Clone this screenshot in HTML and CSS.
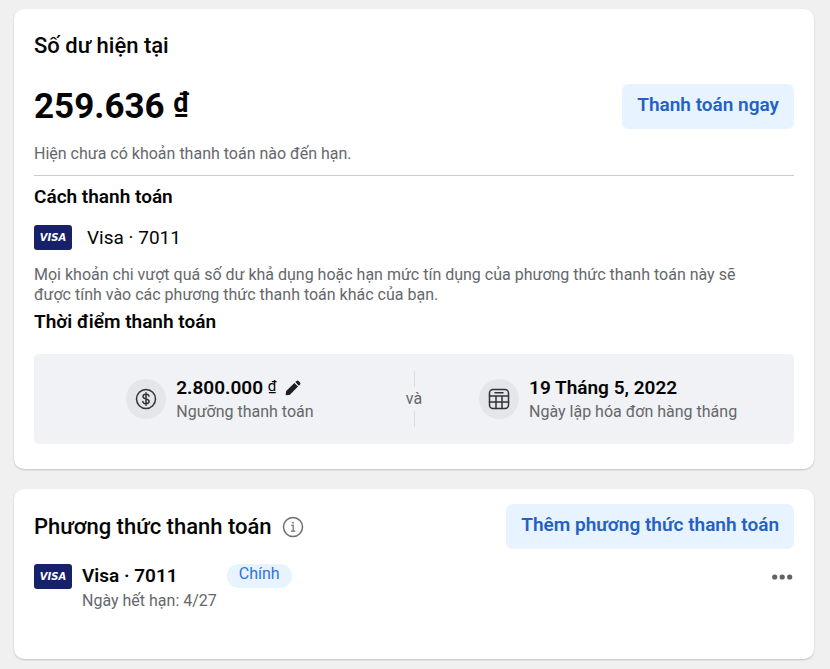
FILE: index.html
```html
<!DOCTYPE html>
<html lang="vi">
<head>
  <meta charset="UTF-8" />
  <meta name="viewport" content="width=device-width, initial-scale=1.0"/>
  <title>Thanh toán</title>
  <link rel="stylesheet" href="styles.css">
</head>
<body>

  <!-- Số dư -->
  <section class="card balance-card">
    <h2>Số dư hiện tại</h2>
    <div class="balance">
      <p class="amount">259.636 <span class="dong">₫</span></p>
      <button class="btn" type="button">Thanh toán ngay</button>
    </div>
    <p class="muted due">Hiện chưa có khoản thanh toán nào đến hạn.</p>

    <h3>Cách thanh toán</h3>
    <div class="card-row">
      <span class="visa">VISA</span>
      <span class="card-name">Visa · 7011</span>
    </div>
    <p class="muted note">Mọi khoản chi vượt quá số dư khả dụng hoặc hạn mức tín dụng của phương thức thanh toán này sẽ được tính vào các phương thức thanh toán khác của bạn.</p>

    <h3>Thời điểm thanh toán</h3>
    <div class="schedule">
      <div class="schedule-item">
        <span class="icon-circle">
          <svg width="22" height="22" viewBox="0 0 22 22" fill="none" stroke="#303338" stroke-width="1.5" stroke-linecap="round">
            <circle cx="11" cy="11" r="9.5"/>
            <path d="M14 8.2C13.7 6.9 12.6 6.3 11 6.3C9.2 6.3 8 7.1 8 8.5C8 11.8 14.1 10 14.1 13.3C14.1 14.8 12.8 15.7 11 15.7C9.2 15.7 8 14.9 7.8 13.5M11 4.8V17.2"/>
          </svg>
        </span>
        <div>
          <div class="threshold">
            <p class="strong">2.800.000 <span class="dong">₫</span></p>
            <button class="icon-btn" type="button" aria-label="Chỉnh sửa ngưỡng thanh toán">
              <svg width="16" height="16" viewBox="0 0 16 16" fill="#1c1e21">
                <path d="M1.2 11.1L9.4 3L13 6.6L4.9 14.8L1.7 15.3Q.6 15.4.7 14.3Z"/>
                <path d="M10.3 2.1L11.6.9Q12.6.1 13.6 1L15 2.4Q15.9 3.4 15.1 4.4L13.9 5.7Z"/>
              </svg>
            </button>
          </div>
          <p class="muted">Ngưỡng thanh toán</p>
        </div>
      </div>
      <div class="and">và</div>
      <div class="schedule-item">
        <span class="icon-circle">
          <svg width="22" height="22" viewBox="0 0 22 22" fill="none" stroke="#303338" stroke-width="1.5" stroke-linecap="round">
            <rect x="1.5" y="1.5" width="19" height="19" rx="3.5"/>
            <path d="M7 4.8H15M1.5 8H20.5M1.5 14H20.5M8 8V20.5M14 8V20.5"/>
          </svg>
        </span>
        <div>
          <p class="strong">19 Tháng 5, 2022</p>
          <p class="muted">Ngày lập hóa đơn hàng tháng</p>
        </div>
      </div>
    </div>
  </section>

  <!-- Phương thức thanh toán -->
  <section class="card methods-card">
    <div class="methods-header">
      <h2>Phương thức thanh toán</h2>
      <svg width="22" height="22" viewBox="0 0 22 22" fill="none" stroke="#6b6e73" stroke-width="1.5">
        <circle cx="11" cy="11" r="9.5"/>
        <path stroke-width="1.2" d="M9.3 9.3H11.2V15.2M9 15.2H13.3"/>
        <circle cx="11" cy="6.7" r=".9" fill="#6b6e73" stroke="none"/>
      </svg>
      <button class="btn" type="button">Thêm phương thức thanh toán</button>
    </div>
    <div class="method">
      <span class="visa">VISA</span>
      <div>
        <p class="strong">Visa · 7011</p>
        <p class="muted">Ngày hết hạn: 4/27</p>
      </div>
      <span class="tag">Chính</span>
      <button class="icon-btn more" type="button" aria-label="Tùy chọn khác">
        <svg width="22" height="6" viewBox="0 0 22 6" fill="#606266">
          <circle cx="2.7" cy="3" r="2.6"/>
          <circle cx="10.2" cy="3" r="2.6"/>
          <circle cx="17.7" cy="3" r="2.6"/>
        </svg>
      </button>
    </div>
  </section>

</body>
</html>
```
FILE: styles.css
```css
* {
  box-sizing: border-box;
}
body {
  font-family: Roboto, sans-serif;
  font-size: 16px;
  line-height: 20px;
  margin: 0;
  padding: 9px 16px 10px 14px;
  background: #f0f0f0;
  color: #050505;
}
h2, h3, p {
  margin: 0;
}
h2 {
  font-size: 22px;
  line-height: 24px;
  font-weight: 500;
}
h3 {
  font-size: 19px;
  line-height: 24px;
  font-weight: 600;
}
button {
  font-family: inherit;
  border: none;
  cursor: pointer;
}
svg {
  display: block;
}
.card {
  background: #fff;
  border-radius: 10px;
  box-shadow: 0 1px 2px rgba(0, 0, 0, 0.2);
  padding: 0 20px;
}
.balance-card {
  padding-top: 25px;
  padding-bottom: 25px;
  margin-bottom: 20px;
}
.balance {
  display: flex;
  align-items: center;
  justify-content: space-between;
  margin-top: 26px;
}
.amount {
  font-size: 35px;
  line-height: 40px;
  font-weight: 700;
}
.dong {
  line-height: 1;
}
.amount .dong {
  font-size: 27px;
  vertical-align: 6px;
}
.strong .dong {
  font-size: 15px;
  font-weight: 400;
  vertical-align: 3px;
}
.btn {
  height: 45px;
  padding: 0 15px 4px;
  border-radius: 7px;
  background: #e7f3ff;
  color: #2561c4;
  font-size: 19px;
  font-weight: 600;
}
.muted {
  color: #65676b;
}
.due {
  margin-top: 15px;
  padding-bottom: 11px;
  margin-bottom: 9px;
  border-bottom: 1px solid #c9cbcf;
}
.card-row {
  display: flex;
  align-items: center;
  gap: 15px;
  margin: 16px 0 15px;
}
.card-name {
  font-size: 19px;
}
.note {
  padding-right: 30px;
  margin-bottom: 5px;
}
.visa {
  width: 38px;
  height: 25px;
  border-radius: 3px;
  background: #172169;
  color: #fff;
  font-family: "DejaVu Sans", sans-serif;
  font-size: 10px;
  line-height: 25px;
  font-weight: 700;
  font-style: italic;
  text-align: center;
}
.schedule {
  display: flex;
  align-items: center;
  height: 90px;
  margin-top: 20px;
  background: #f0f2f5;
  border-radius: 5px;
}
.schedule-item {
  flex: 1;
  display: flex;
  align-items: center;
  justify-content: center;
  gap: 10px;
}
.schedule .muted {
  margin-top: 2px;
}
.icon-circle {
  display: flex;
  align-items: center;
  justify-content: center;
  width: 40px;
  height: 40px;
  border-radius: 50%;
  background: #e4e6ea;
}
.strong {
  font-size: 19px;
  line-height: 24px;
  font-weight: 600;
}
.threshold {
  display: flex;
  align-items: center;
  gap: 9px;
}
.icon-btn {
  padding: 0;
  background: none;
}
.and {
  display: flex;
  flex-direction: column;
  align-items: center;
  gap: 2px;
  color: #65676b;
}
.and::before,
.and::after {
  content: "";
  width: 1px;
  height: 16px;
  background: #dadde1;
}
.methods-card {
  padding-top: 15px;
  padding-bottom: 48px;
}
.methods-header {
  display: flex;
  align-items: center;
  gap: 10px;
}
.methods-header .btn {
  margin-left: auto;
}
.method {
  display: flex;
  align-items: flex-start;
  gap: 10px;
  margin-top: 15px;
}
.method .muted {
  margin-top: 3px;
}
.tag {
  padding: 0 12px 4px;
  border-radius: 12px;
  background: #e7f3ff;
  color: #2f72dc;
}
.more {
  margin-left: auto;
  height: 25px;
}
```
